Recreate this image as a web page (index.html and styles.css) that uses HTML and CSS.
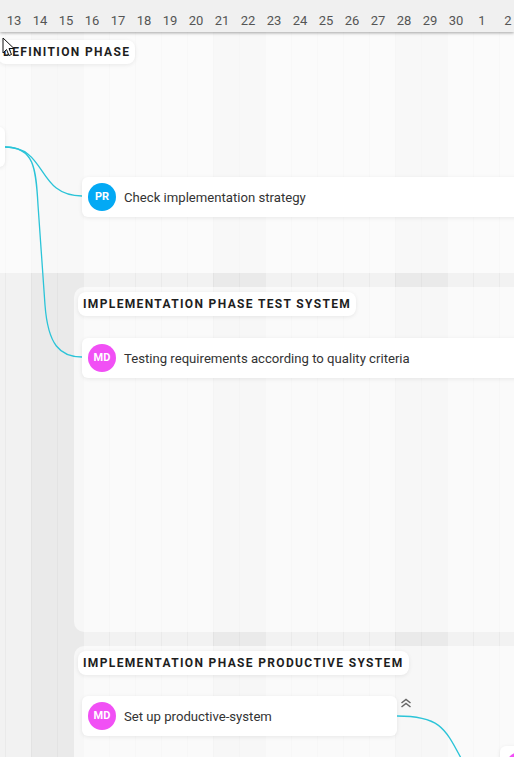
FILE: index.html
```html
<!DOCTYPE html>
<html lang="en">
<head>
<meta charset="UTF-8" />
<meta name="viewport" content="width=device-width, initial-scale=1" />
<title>Project timeline</title>
<link rel="stylesheet" href="styles.css">
</head>
<body>

  <header class="days">
    <span>13</span><span>14</span><span>15</span><span>16</span><span>17</span>
    <span>18</span><span>19</span><span>20</span><span>21</span><span>22</span>
    <span>23</span><span>24</span><span>25</span><span>26</span><span>27</span>
    <span>28</span><span>29</span><span>30</span><span>1</span><span>2</span>
  </header>

  <main class="timeline">

    <section class="phase phase-definition">
      <h2 class="phase-title">Definition phase</h2>
      <div class="task task-parent"></div>
      <div class="task task-wide">
        <span class="avatar avatar-pr">PR</span>
        <span class="task-name">Check implementation strategy</span>
      </div>
    </section>

    <section class="phase phase-test">
      <h2 class="phase-title">Implementation phase test system</h2>
      <div class="task task-wide">
        <span class="avatar avatar-md">MD</span>
        <span class="task-name">Testing requirements according to quality criteria</span>
      </div>
    </section>

    <section class="phase phase-prod">
      <h2 class="phase-title">Implementation phase productive system</h2>
      <div class="task-row">
        <div class="task task-setup">
          <span class="avatar avatar-md">MD</span>
          <span class="task-name">Set up productive-system</span>
        </div>
        <svg class="collapse" width="12" height="10" viewBox="0 0 12 10">
          <path d="M1.5 5 L6 1.5 L10.5 5 M1.5 9 L6 5.5 L10.5 9" fill="none" stroke="#666" stroke-width="1.5"/>
        </svg>
      </div>
      <div class="task task-next">
        <span class="avatar avatar-md"></span>
      </div>
    </section>

    <svg class="links" width="514" height="757" viewBox="0 0 514 757">
      <path d="M5 147 C 48 147, 36 196, 82 196" />
      <path d="M5 147 C 34 147, 36 168, 38 205 L 45 305 C 48 345, 60 357, 82 357" />
      <path d="M397 716 C 440 716, 445 728, 462 760" />
    </svg>
  </main>

  <svg class="cursor" width="14" height="20" viewBox="0 0 14 20">
    <path d="M1 1 L1 16 L4.5 12.5 L7 18.5 L9.5 17.5 L7 11.5 L12 11.5 Z" fill="#fff" stroke="#111" stroke-width="1"/>
  </svg>

</body>
</html>
```

FILE: styles.css
```css
body {
  margin: 0;
  width: 514px;
  height: 757px;
  overflow: hidden;
  position: relative;
  font-family: Roboto, "Liberation Sans", sans-serif;
  color: #333;
  background: #f2f2f2;
}

/* Day header */
.days {
  display: flex;
  height: 32px;
  box-sizing: border-box;
  padding: 9px 0 0 1px;
  background: #f0f0f0;
  box-shadow: 0 1px 3px rgba(0,0,0,0.35);
  position: relative;
  z-index: 3;
}
.days span {
  flex: 0 0 26px;
  text-align: center;
  font-size: 13px;
  line-height: 23px;
  color: #555;
}

/* Timeline canvas with weekend bands and day lines */
.timeline {
  height: 725px;
  overflow: hidden;
  background:
    repeating-linear-gradient(to right, rgba(0,0,0,0.03) 0 1px, transparent 1px 26px) 5px 0 / auto,
    linear-gradient(to right, #eaeaea 0 52px, transparent 52px 182px) 31px 0 / 182px 100% repeat-x,
    #f2f2f2;
}

.phase {
  background: rgba(255,255,255,0.6);
  border-radius: 10px;
  width: 600px;
  box-sizing: border-box;
  overflow: hidden;
}
.phase-definition {
  margin-left: -20px;
  height: 241px;
  padding-top: 8px;
  border-radius: 0 0 10px 10px;
  background: rgba(255,255,255,0.68);
}
.phase-test {
  margin: 14px 0 0 74px;
  height: 345px;
  padding-top: 5px;
}
.phase-prod {
  margin: 14px 0 0 74px;
  height: 200px;
  padding-top: 5px;
}

.phase-title {
  display: inline-block;
  margin: 0 0 0 4px;
  height: 24px;
  padding: 0 5px;
  background: #fff;
  border-radius: 8px;
  box-shadow: 0 1px 4px rgba(0,0,0,0.08);
  font-size: 12px;
  font-weight: 700;
  letter-spacing: 1.35px;
  line-height: 25px;
  text-transform: uppercase;
  color: #1e1e1e;
}
.phase-definition .phase-title {
  margin-left: 18px;
}

/* Task bars */
.task {
  display: flex;
  align-items: center;
  gap: 8px;
  height: 40px;
  box-sizing: border-box;
  padding-left: 6px;
  background: #fff;
  border-radius: 6px;
  box-shadow: 0 1px 4px rgba(0,0,0,0.08);
  font-size: 13.15px;
  color: #333;
}
.task-parent {
  width: 25px;
  margin-top: 63px;
}
.phase-definition .task-wide {
  margin: 10px 0 0 102px;
  width: 500px;
}
.phase-test .task-wide {
  margin: 22px 0 0 8px;
  width: 500px;
}
.task-row {
  display: flex;
  align-items: flex-start;
  gap: 3px;
  margin: 21px 0 0 8px;
}
.task-setup {
  width: 315px;
}
.collapse {
  margin-top: 2px;
}
.task-next {
  margin: 10px 0 0 426px;
  width: 100px;
}

.avatar {
  flex: 0 0 28px;
  height: 28px;
  border-radius: 50%;
  color: #fff;
  font-size: 11px;
  font-weight: 700;
  line-height: 28px;
  text-align: center;
}
.avatar-pr {
  background: #03a9f4;
}
.avatar-md {
  background: #f150f5;
}

/* Dependency links */
.links {
  position: absolute;
  top: 0;
  left: 0;
  pointer-events: none;
  z-index: 2;
}
.links path {
  fill: none;
  stroke: #2bc4d8;
  stroke-width: 1.3;
}

.cursor {
  position: absolute;
  top: 37px;
  left: 2px;
  z-index: 4;
}
```
